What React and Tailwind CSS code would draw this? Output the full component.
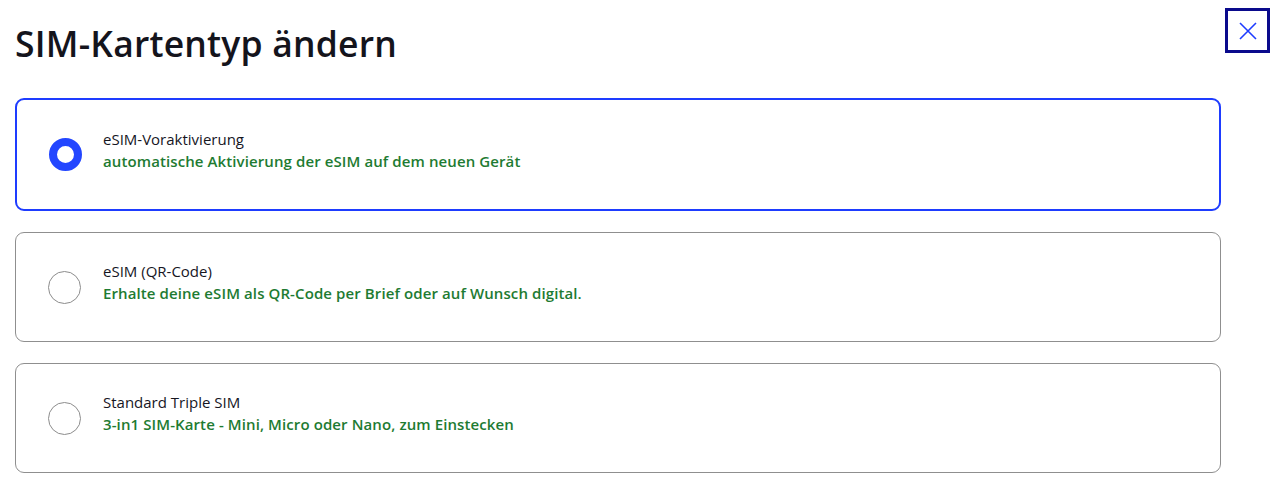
import React from "react";

const options = [
  { title: "eSIM-Voraktivierung", desc: "automatische Aktivierung der eSIM auf dem neuen Gerät", selected: true },
  { title: "eSIM (QR-Code)", desc: "Erhalte deine eSIM als QR-Code per Brief oder auf Wunsch digital.", selected: false },
  { title: "Standard Triple SIM", desc: "3-in1 SIM-Karte - Mini, Micro oder Nano, zum Einstecken", selected: false },
];

export default function App() {
  return (
    <div className="w-[1280px] h-[492px] bg-white text-[#14141e] overflow-hidden" style={{ fontFamily: '"Open Sans", "Noto Sans", sans-serif' }}>
      <div className="flex items-start justify-between pl-[15px] pr-[10px] pt-[8px]">
        <h1 className="mt-[15px] text-[35.5px] leading-[40px] font-semibold tracking-[0.2px] text-[#14141c]">SIM-Kartentyp ändern</h1>
        <button className="w-[45px] h-[45px] border-[3px] border-[#0a0a8c] flex items-center justify-center">
          <svg width="18" height="18" viewBox="0 0 18 18" fill="none" stroke="#1e3cff" strokeWidth="1.6">
            <path d="M1 1L17 17M17 1L1 17" />
          </svg>
        </button>
      </div>
      <div className="flex flex-col gap-[21px] pl-[15px] pr-[59px] mt-[35px]">
        {options.map((o) => (
          <div
            key={o.title}
            className={
              o.selected
                ? "h-[113px] rounded-[9px] border-2 border-[#1e3cff] flex items-center pl-[32px]"
                : "h-[110px] rounded-[9px] border border-[#8f8f8f] flex items-center pl-[32px]"
            }
          >
            {o.selected ? (
              <div className="w-[33px] h-[33px] rounded-full border-[8px] border-[#2346ff] bg-white shrink-0" />
            ) : (
              <div className="w-[33px] h-[33px] rounded-full border-[1.5px] border-[#8c8c8c] bg-white shrink-0" />
            )}
            <div className={o.selected ? "ml-[21px] mb-[10px] flex flex-col" : "ml-[22px] mb-[10px] flex flex-col"}>
              <span className="text-[15px] leading-[22px] text-[#16161f]">{o.title}</span>
              <span className="text-[15px] leading-[22px] font-semibold text-[#1e7b32] tracking-[0.1px]">{o.desc}</span>
            </div>
          </div>
        ))}
      </div>
    </div>
  );
}
